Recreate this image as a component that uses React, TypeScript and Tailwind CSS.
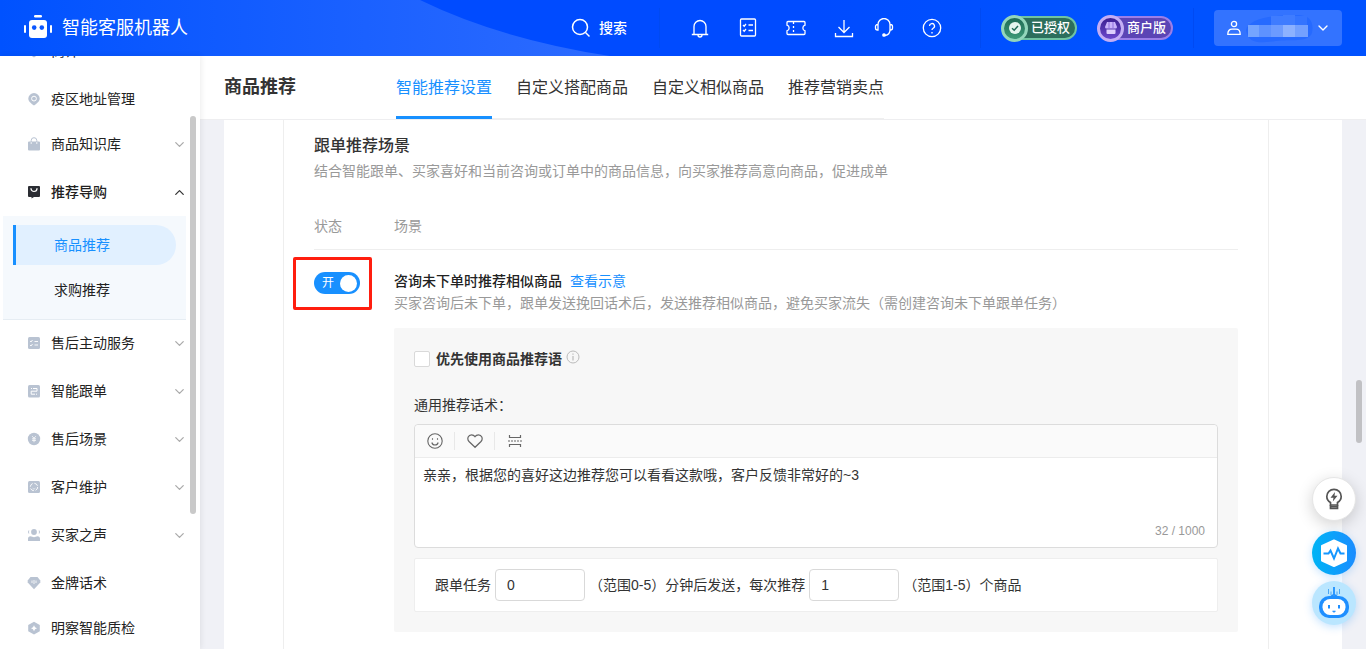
import type { ReactNode } from 'react';
import { ChevronDown, ChevronUp } from 'lucide-react';

type IconName = 'pin' | 'bag' | 'shop' | 'list' | 'order' | 'coin' | 'gear' | 'voice' | 'gem' | 'hex';

interface NavItem {
  name: string;
  icon: IconName;
  group?: boolean;
  children?: string[];
}

const navItems: NavItem[] = [
  { name: '商详', icon: 'pin', group: true },
  { name: '疫区地址管理', icon: 'pin' },
  { name: '商品知识库', icon: 'bag', group: true },
  { name: '推荐导购', icon: 'shop', group: true, children: ['商品推荐', '求购推荐'] },
  { name: '售后主动服务', icon: 'list', group: true },
  { name: '智能跟单', icon: 'order', group: true },
  { name: '售后场景', icon: 'coin', group: true },
  { name: '客户维护', icon: 'gear', group: true },
  { name: '买家之声', icon: 'voice', group: true },
  { name: '金牌话术', icon: 'gem' },
  { name: '明察智能质检', icon: 'hex' },
];

const tabs = ['智能推荐设置', '自定义搭配商品', '自定义相似商品', '推荐营销卖点'];

const navIcons: Record<IconName, ReactNode> = {
  pin: (
    <>
      <path d="M6 0a5.700 5.700 0 0 1 5.700 5.600C11.700 8.500 9 10.500 6 12.500 3 10.500.3 8.500.3 5.600A5.700 5.700 0 0 1 6 0Z" fill="currentColor" />
      <circle cx="6" cy="5.600" r="2.400" fill="none" stroke="#fff" />
    </>
  ),
  bag: (
    <>
      <path d="M3.200 4.500V2.500a2.800 2.800 0 0 1 5.600 0v2" fill="none" stroke="currentColor" />
      <path d="M1 3.500h10a1 1 0 0 1 1 1v7a1 1 0 0 1-1 1H1a1 1 0 0 1-1-1v-7a1 1 0 0 1 1-1Z" fill="currentColor" />
      <path d="M3.200 4v2M8.800 4v2" stroke="#fff" strokeWidth=".8" />
    </>
  ),
  shop: (
    <>
      <path d="M1 0h10a1 1 0 0 1 1 1v9a1 1 0 0 1-1 1H6l-2.500 1.500V11H1a1 1 0 0 1-1-1V1a1 1 0 0 1 1-1Z" fill="currentColor" />
      <path d="M3 2.500a3 3 0 0 0 6 0" fill="none" stroke="#fff" strokeWidth="1.200" strokeLinecap="round" />
    </>
  ),
  list: (
    <>
      <rect width="12" height="12" rx="1.500" fill="currentColor" />
      <path d="m2 4 1 1 1.500-2M2 8l1 1 1.500-2M6.500 4.500H10M6.500 8H10" fill="none" stroke="#fff" strokeWidth=".9" />
    </>
  ),
  order: (
    <>
      <rect width="12" height="12.500" rx="1.500" fill="currentColor" />
      <path d="M3 3.500h1M5 3.500h4v2.700H3.200v3H7M8 9.200h1" fill="none" stroke="#fff" />
    </>
  ),
  coin: (
    <>
      <circle cx="6" cy="6" r="6.200" fill="currentColor" />
      <path d="m4.200 3.200 1.800 2 1.800-2M6 5.200v4M4 5.800h4M4 7.400h4" fill="none" stroke="#fff" strokeWidth=".8" />
    </>
  ),
  gear: (
    <>
      <rect width="12" height="12" rx="1.500" fill="currentColor" />
      <circle cx="6" cy="6" r="3.700" fill="none" stroke="#fff" strokeWidth=".9" strokeDasharray="4 1.800" />
      <path d="M4.600 7.200a1.700 1.700 0 0 0 2.800 0" fill="none" stroke="#fff" strokeWidth=".6" />
    </>
  ),
  voice: (
    <>
      <circle cx="6" cy="3" r="2.900" fill="currentColor" />
      <path d="M.8 1.500a4 4 0 0 0 0 3M11.200 1.500a4 4 0 0 1 0 3" fill="none" stroke="currentColor" strokeWidth=".9" />
      <path d="M0 12v-2.200A2.500 2.500 0 0 1 2.500 7.300l3.500 1 3.500-1A2.500 2.500 0 0 1 12 9.800V12Z" fill="currentColor" />
    </>
  ),
  gem: (
    <>
      <path d="M2.500 0h7l2.800 3.500v2L6 12.300-.3 5.500v-2Z" fill="currentColor" />
      <path d="M4 3.500V6M6 3v4M8 3.500V6" stroke="#fff" strokeWidth=".8" />
    </>
  ),
  hex: (
    <>
      <path d="m6-.300 5.800 3.200v6.400L6 12.500.2 9.300V2.900Z" fill="currentColor" />
      <path d="M6 3.200 7 5.200l2 1-2 1L6 9.200 5 7.200l-2-1 2-1Z" fill="#fff" />
    </>
  ),
};

function NavIcon({ name }: { name: IconName }) {
  return (
    <svg viewBox="-1 -1 14 14" className="h-[14px] w-[14px] shrink-0" aria-hidden="true">
      {navIcons[name]}
    </svg>
  );
}

function LogoIcon() {
  return (
    <svg viewBox="0 1 28 24" className="h-6 w-7 overflow-visible" fill="#fff" aria-hidden="true">
      <rect x="10" y="0" width="8" height="2.500" rx="1.200" />
      <rect x="0" y="10" width="2" height="8" rx="1" />
      <rect x="26" y="10" width="2" height="8" rx="1" />
      <rect x="5" y="5" width="18" height="18" rx="3" />
      <circle cx="10.200" cy="12.600" r="2.300" fill="#0b57ff" />
      <circle cx="17.800" cy="12.600" r="2.300" fill="#0b57ff" />
    </svg>
  );
}

const headerIcons = [
  {
    label: '通知',
    box: 'w-12',
    art: <path d="M1.800 16.500h16.400M4 16.500V8.500a6 6 0 0 1 12 0v8M8 17a2 2 0 0 0 4 0" />,
  },
  {
    label: '任务',
    box: 'w-12',
    art: (
      <>
        <rect x="2.500" y="1" width="15" height="17" rx="1" />
        <path d="m5 7 1.200 1.200L8 6M5 12l1.200 1.200L8 11M10.500 7H15M10.500 12.500H15" />
      </>
    ),
  },
  {
    label: '优惠券',
    box: 'w-12',
    art: (
      <>
        <path d="M2 3.500h16a1 1 0 0 1 1 1v2.700a2.900 2.900 0 0 0 0 5.600v2.700a1 1 0 0 1-1 1H2a1 1 0 0 1-1-1v-2.700a2.900 2.900 0 0 0 0-5.600V4.500a1 1 0 0 1 1-1Z" />
        <path d="M7.500 4v13" strokeDasharray="2 2" />
      </>
    ),
  },
  {
    label: '下载',
    box: 'w-12',
    art: <path d="M10 2v12M4.500 9l5.500 5.500L15.500 9M1.500 15v3.500h17V15" />,
  },
  {
    label: '客服',
    box: 'w-8',
    art: (
      <>
        <path d="M4 6.500a6 6 0 0 1 12 0M4 6.500h-.500a2 2 0 0 0-2 2V10a2 2 0 0 0 2 2H4ZM16 6.500h.5a2 2 0 0 1 2 2V10a2 2 0 0 1-2 2H16ZM16 12c0 3-2 5-5 5.500" />
        <circle cx="10" cy="17" r="1.200" fill="currentColor" />
      </>
    ),
  },
  {
    label: '帮助',
    box: 'w-16',
    art: (
      <>
        <circle cx="10" cy="10" r="8.700" />
        <path d="M7.500 8a2.500 2.500 0 1 1 3.700 2.200c-.8.500-1.200.9-1.200 1.900M10 14v1.400" />
      </>
    ),
  },
];

function Badge({ kind, text }: { kind: 'auth' | 'merchant'; text: string }) {
  const auth = kind === 'auth';
  return (
    <button className="flex h-[27px] w-[76px] items-center">
      <span
        className={`z-10 -mr-5 flex h-[27px] w-[27px] shrink-0 items-center justify-center rounded-full border-[3px] ${
          auth
            ? 'border-[#93d6bb] bg-linear-to-b from-[#1f6b55] to-[#3d9a78]'
            : 'border-[#c3aef5] bg-linear-to-b from-[#3c1f92] to-[#6c48cc]'
        }`}
      >
        {auth ? (
          <svg viewBox="0 0 14 14" className="h-[14px] w-[14px]" aria-hidden="true">
            <circle cx="7" cy="7" r="6" fill="#e4f5ee" />
            <path d="m4 7.200 2.200 2L10 5" fill="none" stroke="#1f6b55" strokeWidth="1.500" />
          </svg>
        ) : (
          <svg viewBox="0 0 14 14" className="h-[14px] w-[14px]" aria-hidden="true">
            <path d="M3 1h8l2 5a1.500 1.500 0 0 1-1.500 1.500h-9A1.500 1.500 0 0 1 1 6Z" fill="#c9b2fb" />
            <path d="M5 1v6M9 1v6" stroke="#8f70dd" />
            <path d="M2.500 8.500h9V12a1 1 0 0 1-1 1h-7a1 1 0 0 1-1-1Z" fill="#ddcffd" />
          </svg>
        )}
      </span>
      <span
        className={`h-6 flex-1 rounded-full border-2 pl-[21px] text-left text-[13px] leading-5 font-medium whitespace-nowrap text-white ${
          auth ? 'border-[#6fc3a2] bg-[#2c6e5c]' : 'border-[#9a7fe8] bg-[#5b45b5]'
        }`}
      >
        {text}
      </span>
    </button>
  );
}

function Header() {
  return (
    <header className="relative flex h-14 shrink-0 items-center bg-linear-to-r from-[#004bff] from-60% to-[#0052ff] to-80% text-white">
      <svg className="absolute top-0 left-0 h-14 w-[610px]" viewBox="0 0 610 56" aria-hidden="true">
        <defs>
          <linearGradient id="wave" x1="0" x2="1">
            <stop offset="0" stopColor="#0052ff" />
            <stop offset="1" stopColor="#2d6bff" />
          </linearGradient>
        </defs>
        <path d="M0 0H420Q500 39 610 56H0Z" fill="url(#wave)" />
      </svg>
      <div className="relative flex flex-1 items-center pl-6">
        <LogoIcon />
        <span className="pl-[10px] text-lg">智能客服机器人</span>
      </div>
      <div className="relative flex h-full shrink-0 items-center">
        <button className="flex h-10 w-[89px] items-center gap-2 border-r border-[#004af2] text-sm font-medium">
          <svg viewBox="0 0 20 20" className="h-5 w-5" fill="none" stroke="currentColor" strokeWidth="1.500" aria-hidden="true">
            <circle cx="9" cy="9" r="7.500" />
            <path d="m14.500 14.500 4 4" />
          </svg>
          搜索
        </button>
        <div className="flex items-center border-r border-[#004af2] pl-4">
          {headerIcons.map((item) => (
            <button key={item.label} aria-label={item.label} className={`flex h-10 items-center justify-center ${item.box}`}>
              <svg viewBox="0 0 20 20" className="h-5 w-5" fill="none" stroke="currentColor" strokeWidth="1.300" aria-hidden="true">
                {item.art}
              </svg>
            </button>
          ))}
          <span className="w-4" />
        </div>
        <div className="flex h-10 items-center gap-5 border-r border-[#004af2] px-5">
          <Badge kind="auth" text="已授权" />
          <Badge kind="merchant" text="商户版" />
        </div>
        <button aria-label="账号" className="mr-6 ml-5 flex h-9 w-32 items-center rounded-sm bg-[#3373ff] pl-[13px]">
          <svg viewBox="0 0 14 16" className="h-4 w-[14px]" fill="none" stroke="currentColor" strokeWidth="1.300" aria-hidden="true">
            <circle cx="7" cy="4" r="2.600" />
            <path d="M.8 14.300C.8 11 2.500 9.200 5 9.200h4c2.500 0 4.200 1.800 4.200 5.100Z" />
          </svg>
          <svg viewBox="0 0 70 32" className="ml-1 h-8 w-[70px]" aria-hidden="true">
            <path d="M1 18C4 6 30 3 52 3c14 0 17 8 15 18-4 10-22 6-36 8S3 33 1 18Z" fill="#266aff" />
            <path d="M26 4h12v9H26zM38 3h12v10H38z" fill="#3f7cff" />
            <path d="M50 4h12v9H50z" fill="#3474ff" />
            <path d="M3 13h11v12H3z" fill="#74a4ff" />
            <path d="M14 13h12v12H14z" fill="#5e92ff" />
            <path d="M26 13h12v12H26z" fill="#6c9bff" />
            <path d="M38 13h12v12H38z" fill="#8cb1ff" />
            <path d="M50 13h13v12H50z" fill="#73a0ff" />
          </svg>
          <ChevronDown size={16} strokeWidth={2} />
        </button>
      </div>
    </header>
  );
}

function Sidebar() {
  return (
    <aside className="relative z-10 w-[200px] shrink-0 overflow-hidden bg-white shadow-[1px_0_6px_rgba(0,0,0,0.08)]">
      {/* list is scrolled a little, the first entry sits half under the header */}
      <nav className="-mt-[29px] text-sm text-[#222]">
        <ul>
          {navItems.map((item) => (
            <li key={item.name} className={item.group ? '' : '-mb-[3px]'}>
              <a href="#" className={`flex h-12 items-center gap-[10px] pr-[13px] pl-[27px] ${item.children ? 'font-medium' : ''}`}>
                <span className={item.children ? 'text-[#2b2d33]' : 'text-[#b9c3d2]'}>
                  <NavIcon name={item.icon} />
                </span>
                <span className="flex-1">{item.name}</span>
                {item.group &&
                  (item.children ? (
                    <ChevronUp size={15} className="text-[#333]" />
                  ) : (
                    <ChevronDown size={15} className="text-[#aaa]" />
                  ))}
              </a>
              {item.children && (
                <ul className="mr-[14px] ml-[3px] -mb-px flex flex-col gap-[5px] border-b border-[#e6edf3] bg-[#f5f9fd] px-[10px] py-[9px]">
                  {item.children.map((child, i) => (
                    <li key={child}>
                      <a
                        href="#"
                        className={`block h-10 leading-10 ${
                          i === 0
                            ? 'rounded-r-full border-l-[3px] border-[#1890ff] bg-[#e1f0ff] pl-[38px] text-[#1890ff]'
                            : 'pl-[41px]'
                        }`}
                      >
                        {child}
                      </a>
                    </li>
                  ))}
                </ul>
              )}
            </li>
          ))}
        </ul>
      </nav>
      <div className="absolute top-[60px] right-1 h-[398px] w-[6px] rounded-full bg-[#c9c9c9]" />
    </aside>
  );
}

function Toolbar() {
  return (
    <div className="flex h-[33px] items-center rounded-t-sm border-b border-[#ececec] bg-[#fafafa] pb-px text-[#666]">
      <button aria-label="表情" className="flex h-[18px] w-10 items-center justify-center border-r border-[#e8e8e8]">
        <svg viewBox="0 0 16 16" className="h-4 w-4" fill="none" stroke="currentColor" strokeWidth="1.100" aria-hidden="true">
          <circle cx="8" cy="8" r="7.200" />
          <path d="M5.500 5.200v1.600M10.500 5.200v1.600M4.800 9.500a3.300 3.300 0 0 0 6.400 0" />
        </svg>
      </button>
      <button aria-label="收藏" className="flex h-[18px] w-10 items-center justify-center border-r border-[#e8e8e8]">
        <svg viewBox="0 0 16 16" className="h-4 w-4" fill="none" stroke="currentColor" strokeWidth="1.200" aria-hidden="true">
          <path d="M8 14.300 2 8.500C-.500 5.500 1.500 1.800 4.500 1.800 6.200 1.800 7.300 2.600 8 3.600c.7-1 1.800-1.800 3.500-1.800 3 0 5 3.700 2.500 6.700Z" />
        </svg>
      </button>
      <button aria-label="分隔" className="flex h-[18px] w-10 items-center justify-center">
        <svg viewBox="0 0 14 14" className="h-[14px] w-[14px]" fill="none" stroke="currentColor" strokeWidth="1.200" aria-hidden="true">
          <path d="M1.500 1v2.500h11V1M1.500 13v-2.500h11V13" />
          <path d="M0 7h14" strokeDasharray="2 1" />
        </svg>
      </button>
    </div>
  );
}

function SceneCard() {
  return (
    <div className="mt-[14px] rounded-xs bg-[#f7f7f7] p-5">
      <div className="flex h-[22px] items-center">
        <label className="flex items-center gap-[6px] font-bold text-[#333]">
          <input type="checkbox" className="h-4 w-4 appearance-none rounded-xs border border-[#d9d9d9] bg-white" />
          优先使用商品推荐语
        </label>
        <svg viewBox="0 0 14 14" className="mb-1 ml-1 h-[14px] w-[14px] text-[#bbb]" fill="none" stroke="currentColor" aria-hidden="true">
          <circle cx="7" cy="7" r="6" />
          <path d="M7 3.500v1.200M7 6v4.500" strokeWidth="1.200" />
        </svg>
      </div>
      <label htmlFor="speech" className="mt-6 block leading-[22px] text-[#333]">
        通用推荐话术：
      </label>
      <div className="mt-2 rounded-sm border border-[#dcdcdc] bg-white">
        <Toolbar />
        <textarea
          id="speech"
          defaultValue="亲亲，根据您的喜好这边推荐您可以看看这款哦，客户反馈非常好的~3"
          className="block h-[62px] w-full resize-none px-2 py-[6px] leading-[22px] text-[#333] outline-none"
        />
        <div className="pr-3 pb-[5px] text-right text-xs leading-[22px] text-[#999]">32 / 1000</div>
      </div>
      <div className="mt-[10px] flex h-[54px] items-center rounded-xs border border-[#eee] bg-white px-5 text-[#333]">
        <label htmlFor="delay">跟单任务</label>
        <input id="delay" defaultValue="0" className="mx-1 h-8 w-[90px] rounded-sm border border-[#d9d9d9] px-[11px] outline-none" />
        <label htmlFor="count">（范围0-5）分钟后发送，每次推荐</label>
        <input id="count" defaultValue="1" className="mx-1 h-8 w-[90px] rounded-sm border border-[#d9d9d9] px-[11px] outline-none" />
        <span>（范围1-5）个商品</span>
      </div>
    </div>
  );
}

function FloatingTools() {
  return (
    <div className="absolute right-[10px] bottom-6 z-20 flex flex-col items-center">
      <button aria-label="提示" className="mb-[10px] flex h-11 w-11 items-center justify-center rounded-full border border-[#e6e6e6] bg-white text-[#555] shadow-[0_4px_16px_rgba(0,0,0,0.18)]">
        <svg viewBox="0 0 18 22" className="h-[22px] w-[18px]" fill="none" stroke="currentColor" strokeWidth="1.700" aria-hidden="true">
          <path d="M5.500 17v-2.500C3 13 1.800 11 1.800 8.500a7.200 7.200 0 0 1 14.400 0c0 2.500-1.200 4.500-3.700 6V17Z" />
          <path d="M5.500 17v3.500h7V17M5.500 18.700h7" />
          <path d="m10 4-4.500 5.700h3L7.800 13.500l4.700-5.700h-3Z" fill="currentColor" stroke="none" />
        </svg>
      </button>
      <button aria-label="诊断" className="mb-[6px] flex h-11 w-11 items-center justify-center rounded-full bg-linear-to-r from-[#00b4f5] to-[#1a8cff] shadow-[0_2px_8px_rgba(24,144,255,0.25)]">
        <svg viewBox="0 0 28 28" className="h-7 w-7" aria-hidden="true">
          <path d="M14 1.500 26 7v14.500L14 27 2 21.500V7Z" fill="#fff" stroke="#fff" strokeWidth="2" strokeLinejoin="round" />
          <path d="M3.500 14.500h5l2-3 3.500 8L18 9.500l2.500 5h4" fill="none" stroke="#1597ff" strokeWidth="2" />
        </svg>
      </button>
      <button aria-label="机器人" className="flex h-11 w-11 items-center justify-center rounded-full bg-[#bae6ff] shadow-[0_2px_8px_rgba(24,144,255,0.25)]">
        <svg viewBox="0 0 32 32" className="h-8 w-8" aria-hidden="true">
          <path d="M10.500 2v5M13 4.500V8M19 4.500V8M21.500 2v5" stroke="#4aa6f5" />
          <path d="M16 0v8M13 9.500l3-2 3 2" stroke="#1e8fff" strokeWidth="1.800" fill="none" />
          <rect x="1" y="9" width="30" height="22" rx="10" fill="#1e8fff" />
          <rect x="4.500" y="12" width="23" height="16" rx="7.500" fill="#fff" />
          <path d="M11 18v3.500M21 18v3.500" stroke="#1e8fff" strokeWidth="2" />
          <path d="M14.500 24h3L16 25.500Z" fill="#1e8fff" stroke="#1e8fff" strokeWidth=".6" />
        </svg>
      </button>
    </div>
  );
}

export default function App() {
  return (
    <div className="flex h-screen flex-col overflow-hidden bg-white font-['Liberation_Sans','Noto_Sans_CJK_SC',sans-serif] text-sm">
      <Header />
      <div className="relative flex min-h-0 flex-1">
        <Sidebar />
        <main className="flex min-w-0 flex-1 flex-col bg-[#f0f1f6]">
          <div className="flex h-16 shrink-0 border-b border-[#eeeef0] bg-white pl-6">
            <h1 className="w-[172px] text-lg leading-[63px] font-bold text-[#333]">商品推荐</h1>
            <nav className="flex gap-6 border-b border-[#efefef] text-base text-[#333]">
              {tabs.map((tab, i) => (
                <a
                  key={tab}
                  href="#"
                  className={`-mb-px h-[63px] leading-[63px] ${i === 0 ? 'border-b-[3px] border-[#1890ff] text-[#1890ff]' : ''}`}
                >
                  {tab}
                </a>
              ))}
            </nav>
          </div>
          <div className="mx-6 min-h-0 flex-1 overflow-hidden bg-white pr-[73px] pl-[59px]">
            <section className="h-full border-x border-[#eee] pt-[14px] pr-[30px] pl-[30px]">
              <h2 className="text-base leading-6 font-medium text-[#333]">跟单推荐场景</h2>
              <p className="mt-[2px] leading-[22px] text-[#999]">
                结合智能跟单、买家喜好和当前咨询或订单中的商品信息，向买家推荐高意向商品，促进成单
              </p>
              <div className="mt-[33px] flex border-b border-[#eee] pb-[12px] leading-[22px] text-[#999]">
                <span className="w-20">状态</span>
                <span>场景</span>
              </div>
              <div className="flex pt-5">
                <div className="relative w-20 shrink-0 pt-[2px]">
                  <label className="flex h-[22px] w-[46px] items-center justify-between rounded-full bg-[#1890ff] pr-[3px] pl-2 text-xs text-white">
                    <input type="checkbox" defaultChecked className="sr-only" />
                    开
                    <span className="h-[17px] w-[17px] rounded-full bg-white" />
                  </label>
                  <div className="pointer-events-none absolute -top-[13px] -left-[21px] h-[53px] w-[79px] rounded-xs border-[3px] border-[#ff1e0f]" />
                </div>
                <div className="min-w-0 flex-1">
                  <div className="leading-[22px]">
                    <span className="font-medium text-[#222]">咨询未下单时推荐相似商品</span>
                    <a href="#" className="ml-2 text-[#1890ff]">
                      查看示意
                    </a>
                  </div>
                  <p className="leading-[22px] text-[#999]">
                    买家咨询后未下单，跟单发送挽回话术后，发送推荐相似商品，避免买家流失（需创建咨询未下单跟单任务）
                  </p>
                  <SceneCard />
                </div>
              </div>
            </section>
          </div>
        </main>
        <div className="absolute top-[324px] right-1 h-[63px] w-[6px] rounded-full bg-[#c1c1c4]" />
        <FloatingTools />
      </div>
    </div>
  );
}
